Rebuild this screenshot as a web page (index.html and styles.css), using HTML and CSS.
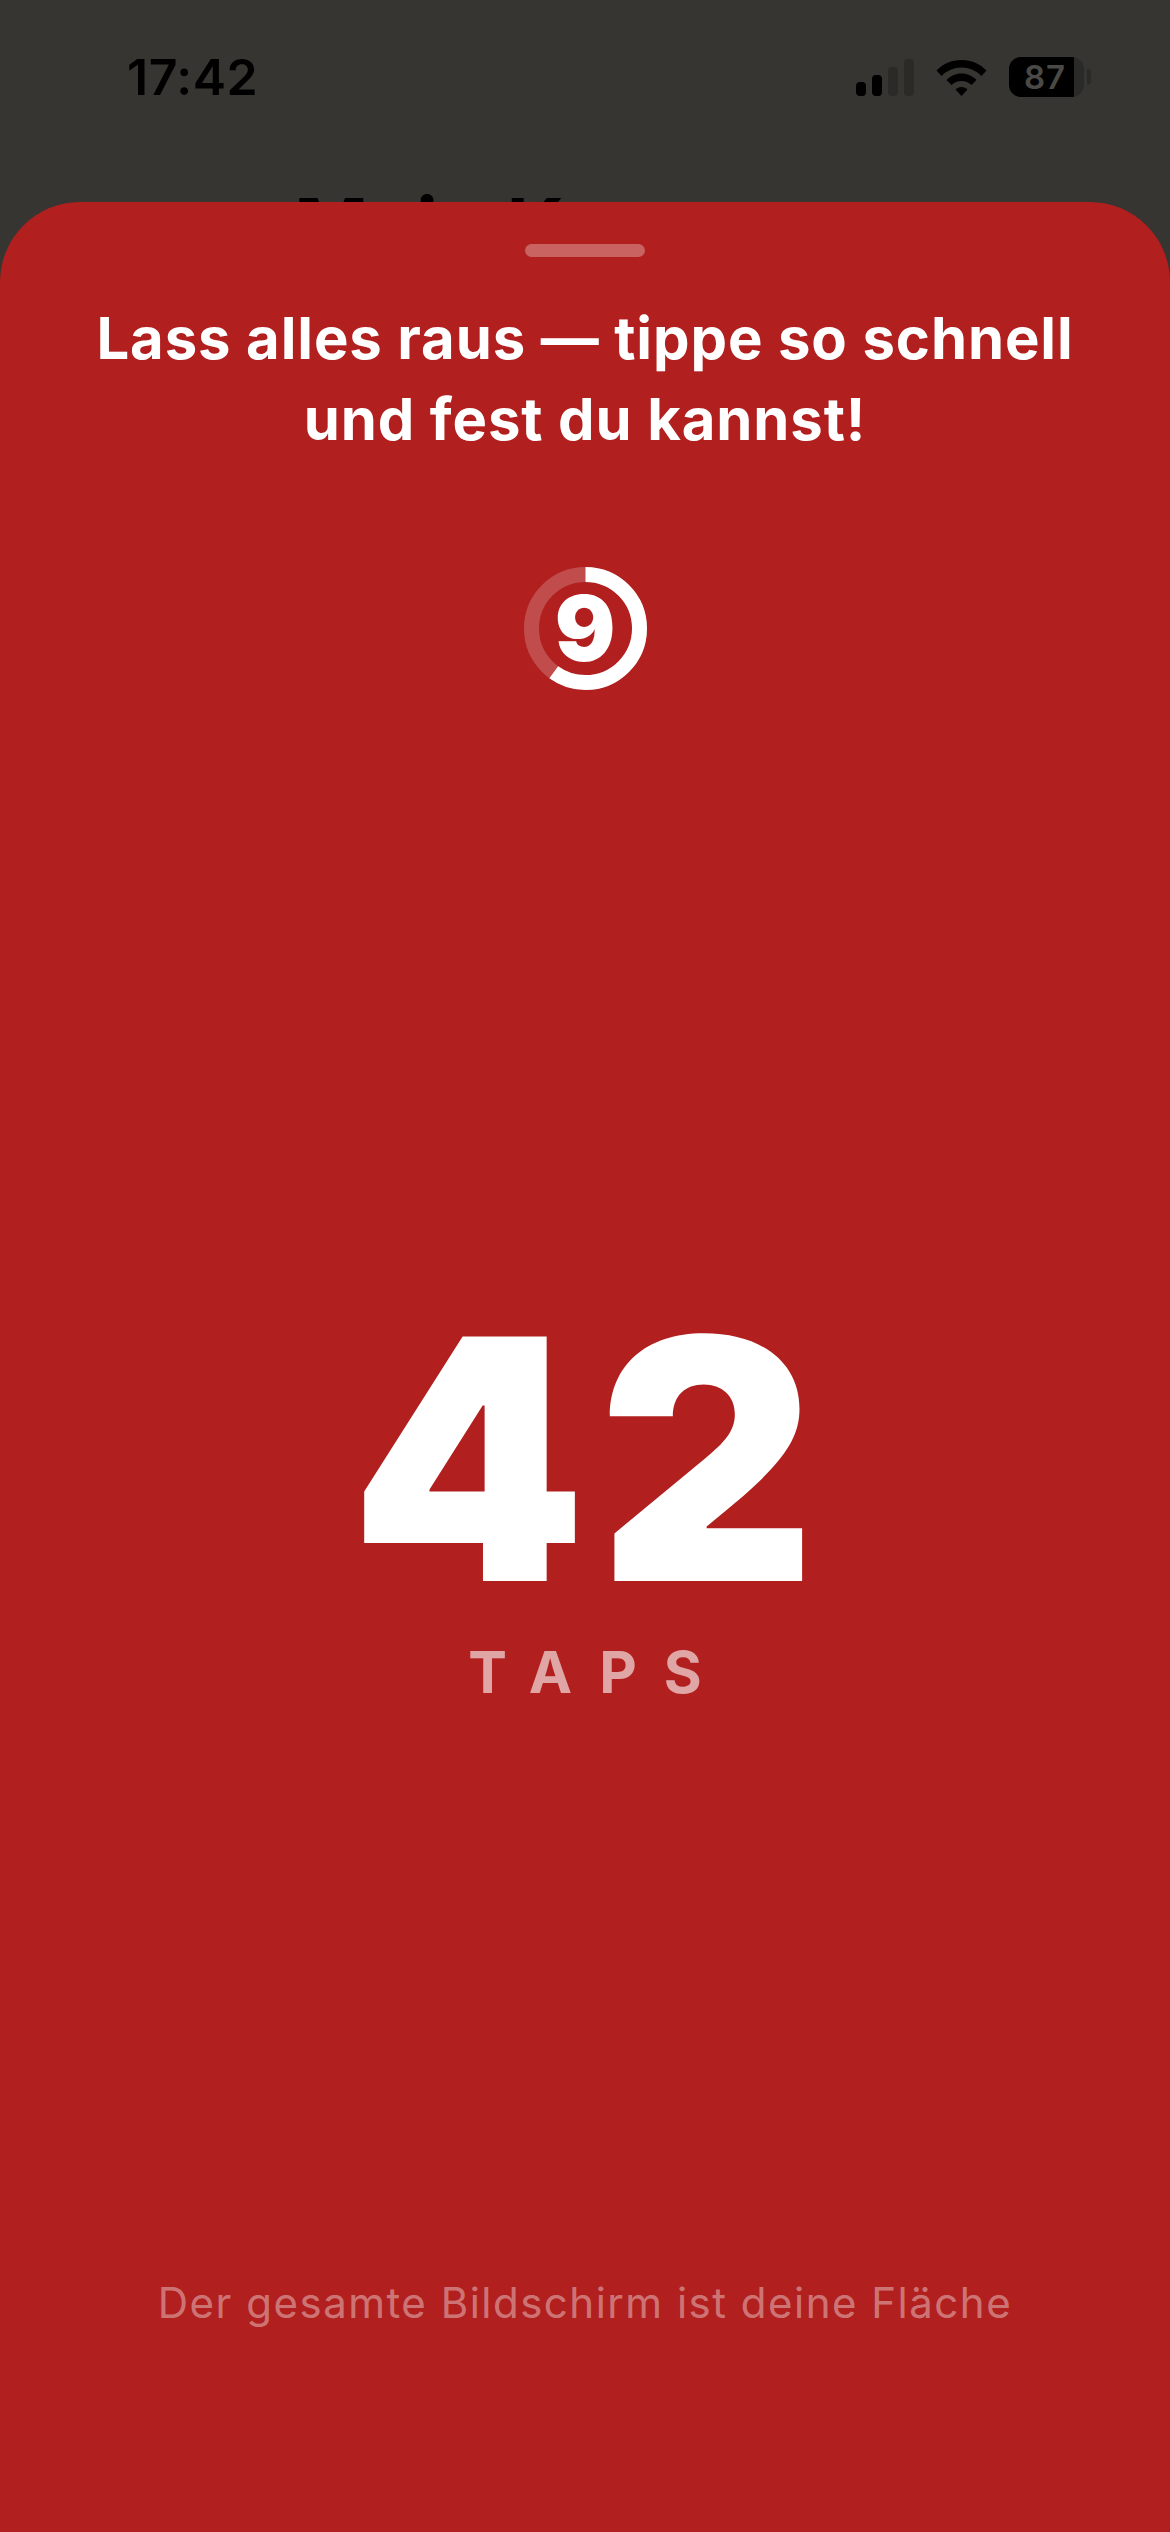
FILE: index.html

```html
<!DOCTYPE html>
<html lang="de">
<head>
    <meta charset="UTF-8">
    <meta name="viewport" content="width=device-width, initial-scale=1.0">
    <title>Taps</title>
    <link rel="stylesheet" href="styles.css">
</head>
<body>
    <div class="screen">
        <header class="status-bar">
            <span class="time">17:42</span>
            <div class="status-icons">
                <div class="signal">
                    <span class="bar bar-1"></span>
                    <span class="bar bar-2"></span>
                    <span class="bar bar-3 off"></span>
                    <span class="bar bar-4 off"></span>
                </div>
                <svg class="wifi" width="51" height="37" viewBox="0 0 51 37">
                    <path d="M0.5 11.5 C7 5 15.500 1 25.500 1 C35.500 1 44 5 50.500 11.500 L45.500 17 C40 11.500 33 8.500 25.500 8.500 C18 8.500 11 11.500 5.500 17 Z"/>
                    <path d="M10.500 21 C14.500 17 19.500 14.500 25.500 14.500 C31.500 14.500 36.500 17 40.500 21 L35.500 26 C32.500 23.500 29.500 22 25.500 22 C21.500 22 18.500 23.500 15.500 26 Z"/>
                    <path d="M19.500 30.500 C21 29 23 28 25.500 28 C28 28 30 29 31.500 30.500 L25.500 37 Z"/>
                </svg>
                <div class="battery">
                    <div class="battery-body"><span class="battery-level">87</span></div>
                    <span class="battery-nub"></span>
                </div>
            </div>
        </header>

        <h1 class="page-title">Mein Kurs</h1>

        <section class="sheet">
            <div class="handle"></div>
            <h2 class="prompt">Lass alles raus — tippe so schnell<br>und fest du kannst!</h2>

            <div class="timer">
                <svg class="timer-ring" width="123" height="123" viewBox="0 0 123 123">
                    <circle class="ring-track" cx="61.500" cy="61.500" r="54"/>
                    <circle class="ring-progress" cx="61.500" cy="61.500" r="54" pathLength="100" stroke-dasharray="60 100"/>
                </svg>
                <span class="timer-value">9</span>
            </div>

            <div class="counter">
                <div class="count">42</div>
                <div class="count-label">TAPS</div>
            </div>

            <p class="hint">Der gesamte Bildschirm ist deine Fläche</p>
        </section>
    </div>
</body>
</html>
```

FILE: styles.css

```css
* {
    box-sizing: border-box;
}

body {
    margin: 0;
    font-family: Inter, "Liberation Sans", sans-serif;
}

.screen {
    position: relative;
    width: 1170px;
    height: 2532px;
    overflow: hidden;
    background-color: #363531;
}

.status-bar {
    display: flex;
    justify-content: space-between;
    align-items: center;
    height: 40px;
    margin-top: 57px;
    padding: 0 79px 0 127px;
}

.time {
    font-size: 50px;
    font-weight: 600;
    letter-spacing: 0.5px;
    color: #000;
}

.status-icons {
    display: flex;
    align-items: center;
    gap: 22px;
}

.signal {
    display: flex;
    align-items: flex-end;
    gap: 6px;
    height: 37px;
}

.bar {
    width: 10px;
    border-radius: 4px;
    background-color: #000;
}

.bar.off {
    background-color: #2a2a27;
}

.bar-1 { height: 14px; }
.bar-2 { height: 21px; }
.bar-3 { height: 29px; }
.bar-4 { height: 37px; }

.wifi {
    display: block;
    fill: #000;
}

.battery {
    display: flex;
    align-items: center;
    gap: 3px;
}

.battery-body {
    display: flex;
    align-items: center;
    width: 75px;
    height: 40px;
    padding-left: 15px;
    border-radius: 12px;
    overflow: hidden;
    background: linear-gradient(to right, #000 65px, #2a2a27 65px);
}

.battery-level {
    font-size: 33px;
    font-weight: 600;
    letter-spacing: 1px;
    color: #4a4945;
}

.battery-nub {
    width: 4px;
    height: 16px;
    border-radius: 0 8px 8px 0;
    background-color: #2a2a27;
}

.page-title {
    margin: 80px 0 0;
    padding-left: 294px;
    font-size: 80px;
    line-height: 100px;
    font-weight: 700;
    color: #000;
}

.sheet {
    position: absolute;
    top: 202px;
    left: 0;
    right: 0;
    bottom: 0;
    display: flex;
    flex-direction: column;
    align-items: center;
    border-radius: 80px 80px 0 0;
    background-color: #b1201f;
    color: #fff;
}

.handle {
    width: 120px;
    height: 13px;
    margin-top: 42px;
    border-radius: 7px;
    background-color: rgba(255, 255, 255, 0.3);
}

.prompt {
    margin: 41px 0 0;
    font-size: 58px;
    line-height: 81px;
    font-weight: 700;
    letter-spacing: 0.9px;
    text-align: center;
}

.timer {
    position: relative;
    display: flex;
    justify-content: center;
    align-items: center;
    width: 123px;
    height: 123px;
    margin-top: 107px;
}

.timer-ring {
    position: absolute;
    top: 0;
    left: 0;
    transform: rotate(-90deg);
}

.ring-track,
.ring-progress {
    fill: none;
    stroke-width: 15;
}

.ring-track {
    stroke: rgba(255, 255, 255, 0.2);
}

.ring-progress {
    stroke: #fff;
}

.timer-value {
    font-size: 90px;
    line-height: 1;
    font-weight: 900;
}

.counter {
    display: flex;
    flex-direction: column;
    align-items: center;
    margin-top: 619px;
}

.count {
    padding-left: 8px;
    font-size: 336px;
    line-height: 300px;
    font-weight: 900;
    letter-spacing: 12px;
}

.count-label {
    margin-top: 28px;
    padding-left: 27px;
    font-size: 58px;
    line-height: 70px;
    font-weight: 700;
    letter-spacing: 27px;
    color: rgba(255, 255, 255, 0.6);
}

.hint {
    margin: auto 0 204px;
    font-size: 42px;
    line-height: 50px;
    letter-spacing: 1.5px;
    color: rgba(255, 255, 255, 0.4);
}
```
